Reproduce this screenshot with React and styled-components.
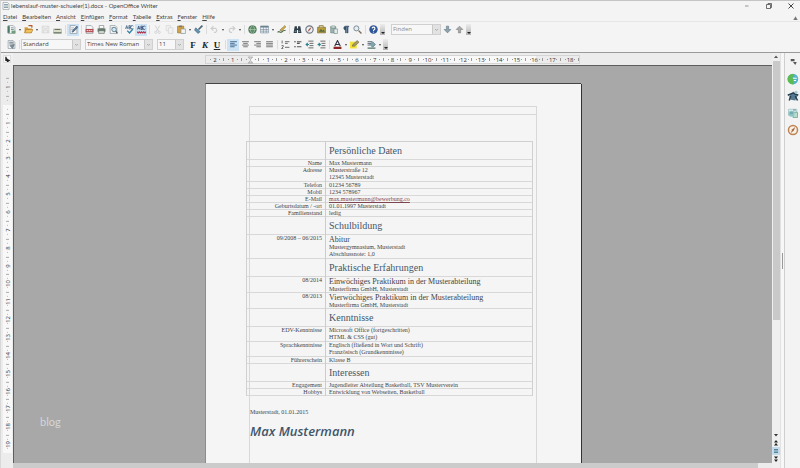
import React from 'react'
import styled, { createGlobalStyle, css } from 'styled-components'

const GlobalStyle = createGlobalStyle`
    * {
        box-sizing: border-box;
    }

    body {
        margin: 0;
        background: #f4f4f4;
        color: #444;
        font-family: 'Open Sans', 'Liberation Sans', sans-serif;
        font-size: 6px;
    }

    button, input, select {
        font-family: inherit;
        font-size: inherit;
        color: inherit;
        margin: 0;
        padding: 0;
        border: 0;
        border-radius: 0;
        background: none;
    }
`;

const Window = styled.div`
    display: flex;
    flex-direction: column;
    height: 100vh;
    overflow: hidden;
    background: #f4f4f4;
    border-top: 1px solid #c4c4c4;
    border-left: 1px solid #d8d8d8;
`;

const TitleBar = styled.header`
    display: flex;
    align-items: center;
    height: 10px;
    padding: 0 5px 0 1px;
    gap: 1px;
    flex: none;
`;

const Title = styled.h1`
    flex: 1;
    margin: 0;
    font-family: Lato, sans-serif;
    font-size: 6px;
    font-weight: 400;
    line-height: 8px;
`;

const WindowButtons = styled.div`
    display: flex;
    gap: 14px;
`;

const WindowButton = styled.button`
    display: flex;
    width: 8px;
    height: 8px;
`;

const MenuBar = styled.nav`
    display: flex;
    align-items: center;
    gap: 5px;
    height: 11px;
    padding: 0 2px;
    flex: none;
    border-bottom: 1px solid #e6e6e6;
    font-family: Lato, sans-serif;
`;

const MenuItem = styled.button`
    line-height: 9px;

    &:first-letter {
        text-decoration: underline;
    }
`;

const MenuClose = styled.button`
    display: flex;
    margin-left: auto;
    width: 5px;
    height: 5px;
`;

const Toolbar = styled.div`
    display: flex;
    align-items: center;
    height: 15px;
    padding-left: 4px;
    flex: none;
`;

const ToolButton = styled.button`
    display: flex;
    align-items: center;
    justify-content: center;
    width: 12px;
    height: 12px;
    flex: none;
    background: ${props => props.$active ? '#cde3f3' : 'transparent'};

    svg {
        width: 9px;
        height: 9px;
        opacity: ${props => props.$faded ? 0.3 : 1};
    }
`;

const Caret = styled.span`
    width: 5px;
    display: flex;
    justify-content: center;
    flex: none;

    &:before {
        content: '';
        border: 1px solid transparent;
        border-top: 2px solid #444;
        border-bottom: 0;
    }
`;

const Separator = styled.span`
    width: 4px;
    height: 9px;
    flex: none;
    background: linear-gradient(#dcdcdc, #dcdcdc) center / 1px 100% no-repeat;
`;

const Overflow = styled.button`
    width: 5px;
    height: 11px;
    margin: 0 6px 0 1px;
    flex: none;
    background: linear-gradient(#ececec, #b4b4b4);
    display: flex;
    align-items: flex-end;
    justify-content: center;

    &:before {
        content: '';
        border: 2px solid transparent;
        border-top: 2px solid #222;
        border-bottom: 0;
        margin-bottom: 1px;
    }
`;

const Field = styled.label`
    display: flex;
    align-items: center;
    width: ${props => props.$width}px;
    height: 11px;
    margin-right: ${props => props.$gap || 0}px;
    flex: none;
    border: 1px solid #d0d0d0;
    background: #f7f7f7;

    select, input {
        flex: 1;
        min-width: 0;
        padding-left: 1px;
        appearance: none;
        outline: none;
        height: 9px;
        line-height: 9px;
    }

    input::placeholder {
        color: #8b8b8b;
        opacity: 1;
    }

    svg {
        width: 8px;
        height: 9px;
        flex: none;
        background: #e2e2e2;
        border-left: 1px solid #c9c9c9;
    }
`;

const Letter = styled.span`
    font-family: 'Liberation Serif', serif;
    font-size: 9px;
    line-height: 12px;
    color: #222;
    font-weight: 700;
    font-style: ${props => props.$italic ? 'italic' : 'normal'};
    text-decoration: ${props => props.$underline ? 'underline' : 'none'};
`;

const Body = styled.div`
    display: grid;
    grid-template-columns: 1fr 5px 15px;
    flex: 1;
    min-height: 0;
    border-top: 1px solid #9a9a9a;
`;

const Editor = styled.main`
    display: grid;
    grid-template-columns: 12px 1fr 8px;
    grid-template-rows: 12px 1fr 5px;
    min-width: 0;
    min-height: 0;
`;

const TabCorner = styled.button`
    display: flex;
    align-items: center;
    justify-content: center;
    background: #f0f0f0;

    svg {
        width: 8px;
        height: 8px;
        background: #f9f9f9;
        border: 1px solid #ddd;
    }
`;

const TopRuler = styled.div`
    display: flex;
    align-items: center;
    justify-content: center;
    background: #ececec;
`;

const SideRuler = styled.div`
    padding-top: 13px;
    overflow: hidden;
    background: #ececec;
    display: flex;
    justify-content: center;
`;

const Scale = styled.ol`
    display: grid;
    list-style: none;
    margin: 0;
    padding: 0;
    color: #333;
    font-size: 6px;
    line-height: 8px;
    ${props => props.$vertical ? css`
        width: 9px;
        height: 375px;
        grid-template-rows: repeat(21, 1fr);
        background: linear-gradient(#ececec 27px, #f8f8f8 27px);
    ` : css`
        width: 375px;
        height: 9px;
        grid-template-columns: repeat(21, 1fr);
        border: 1px solid #d4d4d4;
        background: linear-gradient(90deg, #ececec 44px, #f8f8f8 44px, #f8f8f8 330px, #ececec 330px);
    `}
`;

const Mark = styled.li`
    display: flex;
    align-items: center;
    justify-content: center;
    ${props => props.$vertical ? css`
        writing-mode: vertical-rl;
        transform: rotate(180deg);
        background:
            linear-gradient(#aaa, #aaa) center bottom / 3px 1px no-repeat,
            linear-gradient(#bbb, #bbb) center 4px / 1px 1px no-repeat,
            linear-gradient(#bbb, #bbb) center 13px / 1px 1px no-repeat;
    ` : css`
        background:
            linear-gradient(#999, #999) right center / 1px 3px no-repeat,
            linear-gradient(#999, #999) 4px center / 1px 1px no-repeat,
            linear-gradient(#999, #999) 13px center / 1px 1px no-repeat;
    `}

    svg {
        width: 7px;
        height: 8px;
    }
`;

const Canvas = styled.section`
    position: relative;
    overflow: hidden;
    display: flex;
    justify-content: center;
    align-items: flex-start;
    padding-top: 17px;
    background: #a8a8a8;
    border-top: 1px solid #5e5e5e;
    border-left: 1px solid #5e5e5e;
`;

const Watermark = styled.span`
    position: absolute;
    left: 26px;
    bottom: 34px;
    font-family: Lato, sans-serif;
    font-size: 11px;
    line-height: 14px;
    color: #d6d6d6;
`;

const Paper = styled.article`
    width: 376px;
    height: 530px;
    flex: none;
    padding: 22px 44px 0 43px;
    background: #f5f5f5;
    border-top: 1px solid #444;
    border-left: 1px solid #8c8c8c;
    box-shadow: 1px 1px 0 #333;
    font-family: 'Liberation Serif', serif;
    color: #444;
`;

const TextArea = styled.div`
    height: 100%;
    border: 1px solid #d8d8d8;
`;

const PageHeader = styled.div`
    height: 8px;
    border-bottom: 1px solid #d8d8d8;
`;

const Resume = styled.table`
    width: 287px;
    margin: 26px 0 0 -4px;
    border-spacing: 0;
    border: solid #d0d0d0;
    border-width: 1px 1px 0 1px;
    table-layout: fixed;
    font-size: 6px;
    line-height: 7px;
`;

const Row = styled.tr`
    height: ${props => props.$height}px;
    vertical-align: ${props => props.$middle ? 'middle' : 'top'};
`;

const LabelCell = styled.th`
    width: 79px;
    padding: 0 3px 0 0;
    font-weight: 400;
    text-align: right;
    border-right: 1px solid #ccc;
    box-shadow: inset 0 -1px #d8d8d8;
`;

const ValueCell = styled.td`
    padding: 0 0 0 3px;
    white-space: nowrap;
    box-shadow: inset 0 -1px #d8d8d8;
`;

const SectionTitle = styled.h2`
    margin: 0;
    font-size: 10px;
    line-height: 12px;
    font-weight: 400;
    color: #44586b;
`;

const Line = styled.div`
    font-size: ${props => props.$large ? 8 : 6}px;
    line-height: ${props => props.$large ? 9 : 7}px;
`;

const MailLink = styled.a`
    color: #7d4550;
    text-decoration: underline;
`;

const Place = styled.p`
    margin: 12px 0 0 0;
    font-size: 6px;
    line-height: 8px;
`;

const Signature = styled.p`
    margin: 7px 0 0 0;
    font-family: 'Comic Sans MS', 'Open Sans', sans-serif;
    font-size: 13px;
    font-weight: 600;
    font-style: italic;
    line-height: 16px;
    color: #3f566b;
`;

const ScrollColumn = styled.div`
    grid-row: 1 / 4;
    grid-column: 3;
    display: flex;
    flex-direction: column;
    align-items: center;
    padding-bottom: 5px;
    background: #efefef;

    svg {
        width: 8px;
        height: 8px;
        flex: none;
    }
`;

const Thumb = styled.div`
    width: 7px;
    flex: 0 1 259px;
    background: #c9c9c9;
`;

const Spacer = styled.div`
    flex: 1;
`;

const PageButton = styled.button`
    display: flex;
    flex: none;
    background: ${props => props.$active ? '#c4dbe9' : 'none'};
`;

const BottomScroll = styled.div`
    grid-column: 1 / 3;
    background: #cbcbcb;
    border-left: 12px solid #ececec;
    border-right: 14px solid #ececec;
`;

const Splitter = styled.div`
    background: #f7f7f7;
    border-left: 1px solid #e2e2e2;
    border-right: 1px solid #cfcfcf;
    display: flex;
    align-items: center;
    justify-content: center;

    &:before {
        content: '';
        width: 1px;
        height: 16px;
        background: #999;
    }
`;

const SideBar = styled.aside`
    display: flex;
    flex-direction: column;
    align-items: center;
    gap: 5px;
    padding-top: 3px;
    background: #f3f3f3;
`;

const SideButton = styled.button`
    display: flex;
    width: 12px;
    height: 12px;

    svg {
        width: 12px;
        height: 12px;
    }
`;

const sheet = <path d="M2 1h9l3 3v11H2z" fill="#f7f7f7" stroke="#71828a" />

const icons = {
    doc: <>{sheet}<path d="M4 5h8M4 8h8M4 11h8" stroke="#6b8794" strokeWidth="1.5" /></>,
    newDoc: <>{sheet}<path d="M1 2v12h4V2z" fill="#4d7a66" /><path d="M7 5h5M7 8h5" stroke="#688" strokeWidth="1.5" /><path d="M8 10h7v5H8z" fill="#6f9e79" /></>,
    open: <><path d="M1 4h5l2 2h6v8H1z" fill="#d79b3c" /><path d="M4 8h12l-3 6H1z" fill="#f2c25e" stroke="#a36e22" /><path d="M8 1h6v4" stroke="#b35a2a" strokeWidth="2" fill="none" /></>,
    save: <path d="M2 2h12v12H2zM5 2v4h6V2M4 14V9h8v5" fill="#ddd" stroke="#777" />,
    mail: <><path d="M1 7h14v7H1z" fill="#d9dcc9" stroke="#a3ab9d" /><path d="M1 14h14M3 8h10" stroke="#66735f" fill="none" strokeWidth="2" /></>,
    edit: <>{sheet}<path d="M4 5h5M4 8h3M4 11h3" stroke="#7b8b99" /><path d="M6 13l1-4 7-7 2 2-7 7z" fill="#5b7a96" stroke="#3c566e" /></>,
    pdf: <>{sheet}<path d="M1 7h14v6H1z" fill="#b04a50" /><path d="M3 10h10" stroke="#fff" strokeWidth="1.5" strokeDasharray="3 1" /></>,
    print: <><path d="M4 1h8v5H4z" fill="#fff" stroke="#667" /><path d="M1 6h14v6H1z" fill="#65796c" /><path d="M3 10h10v5H3z" fill="#d5dbd5" stroke="#516259" /></>,
    preview: <>{sheet}<path d="M4 5h5" stroke="#789" /><circle cx="9" cy="8" r="4" fill="#d3e7ee" stroke="#56788a" strokeWidth="1.5" /><path d="M12 11l3 4" stroke="#4a5960" strokeWidth="2" /></>,
    spell: <><path d="M1 7l2-6 2 6M2 5h2M7 1v6h2a1.500 1.500 0 000-3H7h2a1.500 1.500 0 000-3zM15 2a3 3 0 100 4" fill="none" stroke="#496b8c" strokeWidth="1.500" /><path d="M4 10l4 4 6-7" fill="none" stroke="#3781a6" strokeWidth="2.5" /></>,
    autospell: <><path d="M1 8l2-6 2 6M2 6h2M7 2v6h2a1.500 1.500 0 000-3H7h2a1.500 1.500 0 000-3zM15 3a3 3 0 100 4" fill="none" stroke="#3a4f79" strokeWidth="1.500" /><path d="M0 12l2 2 2-2 2 2 2-2 2 2 2-2 2 2 2-2" fill="none" stroke="#b1344a" strokeWidth="2" /></>,
    cut: <path d="M4 1l6 10M12 1L6 11M5 11a2 2 0 10.1 0M11 11a2 2 0 10.1 0" fill="none" stroke="#777" strokeWidth="1.5" />,
    copy: <><path d="M2 1h8v9H2z" fill="#eee" stroke="#777" /><path d="M6 5h8v10H6z" fill="#eee" stroke="#777" /></>,
    paste: <><path d="M1 2h11v12H1z" fill="#d6a247" stroke="#936826" /><path d="M4 1h5v3H4z" fill="#777" /><path d="M7 7h8v8H7z" fill="#f4f4f4" stroke="#688" /></>,
    brush: <><path d="M15 1L8 8" stroke="#4d6678" strokeWidth="3" /><path d="M3 5l8 7-4 3-6-6z" fill="#5f93af" stroke="#3a667e" /></>,
    undo: <path d="M6 2L2 6l4 4M2 6h8a4 4 0 010 7H7" fill="none" stroke="#777" strokeWidth="2" />,
    redo: <path d="M10 2l4 4-4 4M14 6H6a4 4 0 000 7h3" fill="none" stroke="#777" strokeWidth="2" />,
    globe: <><circle cx="8" cy="8" r="7" fill="#5d8d68" stroke="#3f6549" /><path d="M1 8h14M8 1c-5 4-5 10 0 14M8 1c5 4 5 10 0 14" fill="none" stroke="#bcd5be" /></>,
    table: <><path d="M1 2h14v12H1z" fill="#f2f5f7" stroke="#6b8292" /><path d="M1 3h14" stroke="#6b8292" strokeWidth="3" /><path d="M1 8h14M1 11h14M6 2v12M11 2v12" stroke="#6b8292" /></>,
    draw: <><path d="M1 13c4-4 4 3 8-1s4-1 6-3" fill="none" stroke="#556d52" strokeWidth="2" /><path d="M5 9l9-8 2 2-8 8z" fill="#cfae50" stroke="#807235" /></>,
    binoculars: <><path d="M3 2h4v4h2V2h4l2 12H9V9H7v5H1z" fill="#2f3f49" /><path d="M3 11h3M10 11h3" stroke="#8b9ca8" strokeWidth="2" /></>,
    compass: <><circle cx="8" cy="8" r="6.500" fill="#edf0f2" stroke="#6b7680" strokeWidth="2" /><path d="M12 3L9 9l-5 4 3-6z" fill="#a75445" /></>,
    gallery: <><path d="M1 4h14v10H1z" fill="#b99d3d" stroke="#675a28" /><path d="M4 4V1h7v3" fill="#d9cd94" stroke="#675a28" /><path d="M3 12l4-5 3 3 2-2 2 4z" fill="#526b43" /></>,
    database: <><path d="M3 3v11h9V3z" fill="#9eb3ae" stroke="#5e7b78" /><ellipse cx="7.500" cy="3.500" rx="4.500" ry="2" fill="#dbe6e3" stroke="#5e7b78" /><path d="M9 7h6v8H9z" fill="#e7eeee" stroke="#5e7b78" /></>,
    pilcrow: <path d="M14 2H7a4 4 0 000 7h1v5h1.500V3H11v11h1.500V3H14z" fill="#34516d" stroke="#34516d" />,
    zoom: <><circle cx="6" cy="6" r="4.500" fill="#e4eef2" stroke="#6a7e8a" strokeWidth="1.500" /><path d="M10 10l5 5" stroke="#7d6850" strokeWidth="2.500" /></>,
    help: <><circle cx="8" cy="8" r="7.500" fill="#2f5796" /><path d="M5.500 6a2.500 2.500 0 113.500 2.500c-1 .4-1 1-1 2M8 12v1.500" fill="none" stroke="#fff" strokeWidth="2" /></>,
    down: <path d="M6 2h4v6h4l-6 6-6-6h4z" fill="#8fa3ae" stroke="#5d7480" />,
    up: <path d="M6 14h4V8h4L8 2 2 8h4z" fill="#a9a9a9" stroke="#7b7b7b" />,
    styles: <>{sheet}<path d="M4 4h8M4 7h8" stroke="#567" strokeWidth="1.500" /><path d="M5 10l8-2-3 7z" fill="#7b93a4" stroke="#566" /></>,
    left: <path d="M2 3h12M2 6h8M2 9h12M2 12h8" stroke="#335e86" strokeWidth="1.500" />,
    center: <path d="M2 3h12M4 6h8M2 9h12M4 12h8" stroke="#666" strokeWidth="1.500" />,
    right: <path d="M2 3h12M6 6h8M2 9h12M6 12h8" stroke="#666" strokeWidth="1.500" />,
    justify: <path d="M2 3h12M2 6h12M2 9h12M2 12h12" stroke="#666" strokeWidth="1.500" />,
    numbered: <path d="M7 3h8M7 13h8M7 6h5M2 1v5M1 10h3v2l-3 3h3" fill="none" stroke="#555" strokeWidth="1.500" />,
    bullets: <path d="M7 3h8M7 12h8M7 6h5M2 3h3M2 12h3" stroke="#555" strokeWidth="2" />,
    outdent: <><path d="M6 2h9M8 6h7M8 10h7M6 14h9" stroke="#555" strokeWidth="1.500" /><path d="M7 8H2m3-3L2 8l3 3" fill="none" stroke="#2f8490" strokeWidth="2" /></>,
    indent: <><path d="M6 2h9M8 6h7M8 10h7M6 14h9" stroke="#555" strokeWidth="1.500" /><path d="M1 8h5M3 5l3 3-3 3" fill="none" stroke="#2f8490" strokeWidth="2" /></>,
    fontColor: <><path d="M3 11L8 1l5 10M5 8h6" fill="none" stroke="#334" strokeWidth="2" /><path d="M1 12h14v4H1z" fill="#8e2525" /></>,
    highlight: <><path d="M0 3h12v12H0z" fill="#f3e136" /><path d="M4 11l1-3 8-7 3 3-8 7z" fill="#a79a6b" stroke="#665e3a" /></>,
    background: <><path d="M1 3h8M1 6h6M1 9h4" stroke="#456" strokeWidth="1.500" /><path d="M5 8l5-5 5 5-5 5z" fill="#83a3ae" stroke="#3f6575" /><path d="M1 13h14v3H1z" fill="#78958c" /></>,
    minimize: <path d="M4 8h7" stroke="#777" strokeWidth="1.500" />,
    restore: <path d="M3 5h8v8H3zM6 5V3h7v8h-2" fill="none" stroke="#444" strokeWidth="1.500" />,
    close: <path d="M3 3l10 10M13 3L3 13" stroke="#444" strokeWidth="2" />,
    menuClose: <path d="M8 2l7 12H1z" fill="#777" />,
    tab: <path d="M5 2v10h7M9 9v6l5-3z" fill="#222" stroke="#222" strokeWidth="3" />,
    chevron: <path d="M5 7l3 3 3-3" fill="none" stroke="#888" strokeWidth="1.500" />,
    arrowUp: <path d="M8 5l4 5H4z" fill="#555" />,
    arrowDown: <path d="M8 11l4-5H4z" fill="#333" />,
    pageUp: <path d="M8 2l4 5H4zM8 8l4 5H4z" fill="#222" />,
    pageDown: <path d="M8 8l4-5H4zM8 14l4-5H4z" fill="#222" />,
    dot: <path d="M4 5h8M4 8h8M4 11h8" stroke="#56829d" strokeWidth="2" />,
    marker: <path d="M3 1h10L8 7zM8 9l5 6H3z" fill="#ddd" stroke="#777" />,
    sideMenu: <path d="M5 4h5v3H5zM8 8h5l-2 4z" fill="#555" />,
    properties: <><circle cx="8" cy="8" r="7" fill="#55b3cb" /><path d="M2 4a7 7 0 007 11V9L7 6l3-4a7 7 0 00-8 2z" fill="#5cbc51" /><path d="M8 7h5M9 10h3" stroke="#fff" strokeWidth="1.500" /></>,
    stylesPanel: <><path d="M3 8l6-6 5 6-3 6-6-1z" fill="#567b91" /><path d="M1 7l7-3 7 3M5 8l-2 6M11 8l3 6" stroke="#263f51" strokeWidth="2" fill="none" /><circle cx="12" cy="3" r="2" fill="#a9cbd8" /></>,
    galleryPanel: <><path d="M2 3h11v8H2z" fill="#dcebec" stroke="#9cc3c2" /><path d="M8 7h6v7H8z" fill="#b5dbc9" stroke="#6fa096" /><circle cx="6" cy="9" r="4" fill="#8fc4c6" /><path d="M4 8h4M8 4h4" stroke="#4f7f88" /></>,
    navigator: <><circle cx="8" cy="8" r="6" fill="#fbf0e4" stroke="#bf8353" strokeWidth="2" /><path d="M11 4L9 9l-4 3 2-5z" fill="#a76b48" /></>,
}

const Icon = ({ name }) => <svg viewBox="0 0 16 16" width="8" height="8" aria-hidden="true">{icons[name]}</svg>

const menus = ['Datei', 'Bearbeiten', 'Ansicht', 'Einfügen', 'Format', 'Tabelle', 'Extras', 'Fenster', 'Hilfe'];

// '|' is a separator and 'v' a drop-down arrow
const standardTools = [
    'newDoc', 'v', 'open', 'v', 'save', 'mail', '|', 'edit', '|', 'pdf', 'print', 'preview', '|',
    'spell', 'autospell', '|', 'cut', 'copy', 'paste', 'v', 'brush', '|', 'undo', 'v', 'redo', 'v', '|',
    'globe', 'table', 'v', 'draw', '|', 'binoculars', 'compass', 'gallery', 'database', 'pilcrow', 'zoom', '|', 'help',
];
const formatTools = [
    'left', 'center', 'right', 'justify', '|', 'numbered', 'bullets', 'outdent', 'indent', '|',
    'fontColor', 'v', 'highlight', 'v', 'background', 'v',
];
const activeTools = ['edit', 'autospell', 'left'];
const fadedTools = ['save', 'cut', 'copy', 'undo', 'redo'];

const sections = [
    { title: 'Persönliche Daten', rows: [
        { label: 'Name', lines: ['Max Mustermann'] },
        { label: 'Adresse', lines: ['Musterstraße 12', '12345 Musterstadt'] },
        { label: 'Telefon', lines: ['01234 56789'] },
        { label: 'Mobil', lines: ['1234 578967'] },
        { label: 'E-Mail', mail: 'max.mustermann@bewerbung.co' },
        { label: 'Geburtsdatum / -ort', lines: ['01.01.1997 Musterstadt'] },
        { label: 'Familienstand', lines: ['ledig'] },
    ] },
    { title: 'Schulbildung', rows: [
        { label: '09/2008 – 06/2015', heading: 'Abitur', lines: ['Mustergymnasium, Musterstadt', 'Abschlussnote: 1,0'] },
    ] },
    { title: 'Praktische Erfahrungen', rows: [
        { label: '08/2014', heading: 'Einwöchiges Praktikum in der Musterabteilung', lines: ['Musterfirma GmbH, Musterstadt'] },
        { label: '08/2013', heading: 'Vierwöchiges Praktikum in der Musterabteilung', lines: ['Musterfirma GmbH, Musterstadt'] },
    ] },
    { title: 'Kenntnisse', rows: [
        { label: 'EDV-Kenntnisse', lines: ['Microsoft Office (fortgeschritten)', 'HTML & CSS (gut)'] },
        { label: 'Sprachkenntnisse', lines: ['Englisch (fließend in Wort und Schrift)', 'Französisch (Grundkenntnisse)'] },
        { label: 'Führerschein', lines: ['Klasse B'] },
    ] },
    { title: 'Interessen', rows: [
        { label: 'Engagement', lines: ['Jugendleiter Abteilung Basketball, TSV Musterverein'] },
        { label: 'Hobbys', lines: ['Entwicklung von Webseiten, Basketball'] },
    ] },
];

function Tools({ items }) {
    return items.map((item, i) => {
        if (item === '|') return <Separator key={i} />
        if (item === 'v') return <Caret key={i} />
        return (
            <ToolButton key={i} aria-label={item} $active={activeTools.includes(item)} $faded={fadedTools.includes(item)}>
                <Icon name={item} />
            </ToolButton>
        )
    })
}

function Choice({ label, value, width, gap }) {
    return (
        <Field $width={width} $gap={gap}>
            <select aria-label={label} defaultValue={value}>
                <option>{value}</option>
            </select>
            <Icon name="chevron" />
        </Field>
    )
}

function Ruler({ from, vertical }) {
    const marks = Array.from({ length: 21 }, (_, i) => from + i);
    return (
        <Scale $vertical={vertical}>
            {marks.map(mark => (
                <Mark key={mark} $vertical={vertical}>
                    {mark !== 0 && Math.abs(mark)}
                    {mark === 0 && !vertical && <Icon name="marker" />}
                </Mark>
            ))}
        </Scale>
    )
}

function rowHeight(row) {
    if (row.heading) return row.lines.length * 8 + 8;
    return row.lines && row.lines.length > 1 ? 15 : 7;
}

function ResumeTable() {
    return (
        <Resume>
            {sections.map(section => (
                <tbody key={section.title}>
                    <Row $height={18} $middle>
                        <LabelCell as="td" />
                        <ValueCell><SectionTitle>{section.title}</SectionTitle></ValueCell>
                    </Row>
                    {section.rows.map(row => (
                        <Row key={row.label} $height={rowHeight(row)}>
                            <LabelCell scope="row">{row.label}</LabelCell>
                            <ValueCell>
                                {row.heading && <Line $large>{row.heading}</Line>}
                                {row.mail && <Line><MailLink href={`mailto:${row.mail}`}>{row.mail}</MailLink></Line>}
                                {row.lines && row.lines.map(line => <Line key={line}>{line}</Line>)}
                            </ValueCell>
                        </Row>
                    ))}
                </tbody>
            ))}
        </Resume>
    )
}

function App() {
    return (
        <Window>
            <GlobalStyle />
            <TitleBar>
                <Icon name="doc" />
                <Title>lebenslauf-muster-schueler(1).docx - OpenOffice Writer</Title>
                <WindowButtons>
                    {['minimize', 'restore', 'close'].map(name => (
                        <WindowButton key={name} aria-label={name}><Icon name={name} /></WindowButton>
                    ))}
                </WindowButtons>
            </TitleBar>
            <MenuBar>
                {menus.map(menu => <MenuItem key={menu}>{menu}</MenuItem>)}
                <MenuClose aria-label="close document"><Icon name="menuClose" /></MenuClose>
            </MenuBar>
            <Toolbar>
                <Tools items={standardTools} />
                <Overflow aria-label="more" />
                <Field $width={50}>
                    <input aria-label="Finden" placeholder="Finden" />
                    <Icon name="chevron" />
                </Field>
                <Tools items={['down', 'up']} />
                <Overflow aria-label="more" />
            </Toolbar>
            <Toolbar>
                <Tools items={['styles', '|']} />
                <Choice label="Vorlage" value="Standard" width={60} gap={4} />
                <Choice label="Schriftart" value="Times New Roman" width={68} gap={4} />
                <Choice label="Schriftgröße" value="11" width={27} gap={3} />
                <ToolButton><Letter>F</Letter></ToolButton>
                <ToolButton><Letter $italic>K</Letter></ToolButton>
                <ToolButton><Letter $underline>U</Letter></ToolButton>
                <Separator />
                <Tools items={formatTools} />
                <Overflow aria-label="more" />
            </Toolbar>
            <Body>
                <Editor>
                    <TabCorner aria-label="tab"><Icon name="tab" /></TabCorner>
                    <TopRuler><Ruler from={-2} /></TopRuler>
                    <SideRuler><Ruler from={-1} vertical /></SideRuler>
                    <Canvas>
                        <Paper>
                            <TextArea>
                                <PageHeader />
                                <ResumeTable />
                                <Place>Musterstadt, 01.01.2015</Place>
                                <Signature>Max Mustermann</Signature>
                            </TextArea>
                        </Paper>
                        <Watermark>blog</Watermark>
                    </Canvas>
                    <BottomScroll />
                    <ScrollColumn>
                        <Icon name="arrowUp" />
                        <Thumb />
                        <Spacer />
                        <Icon name="arrowDown" />
                        <PageButton aria-label="previous page"><Icon name="pageUp" /></PageButton>
                        <PageButton aria-label="navigation" $active><Icon name="dot" /></PageButton>
                        <PageButton aria-label="next page"><Icon name="pageDown" /></PageButton>
                    </ScrollColumn>
                </Editor>
                <Splitter />
                <SideBar>
                    {['sideMenu', 'properties', 'stylesPanel', 'galleryPanel', 'navigator'].map(name => (
                        <SideButton key={name} aria-label={name}><Icon name={name} /></SideButton>
                    ))}
                </SideBar>
            </Body>
        </Window>
    )
}

export default App;
